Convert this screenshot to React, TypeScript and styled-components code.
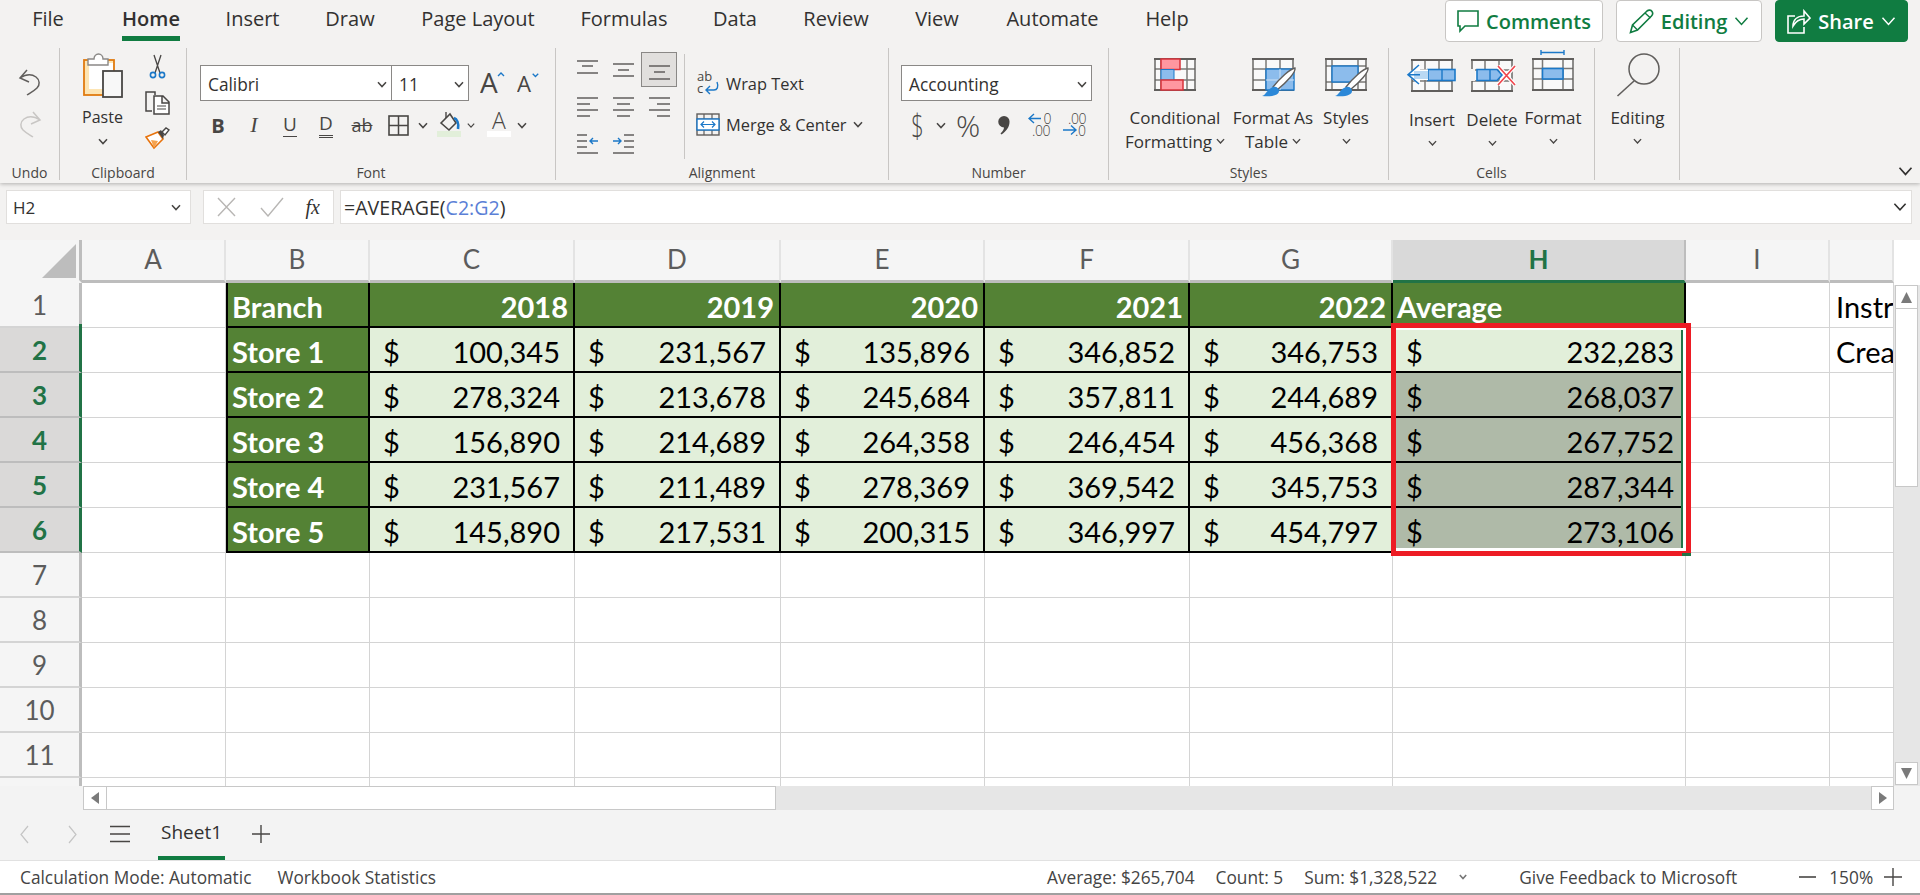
import { Fragment } from 'react'
import styled, { createGlobalStyle } from 'styled-components'

const GlobalStyle = createGlobalStyle`
  html, body {
    margin: 0;
    height: 100%;
    overflow: hidden;
    background: #fff;
  }
  * {
    box-sizing: border-box;
  }
`

const UI_FONT = `'Open Sans', 'Noto Sans', sans-serif`
const CELL_FONT = `Lato, 'Liberation Sans', sans-serif`
const GREEN = '#107c41'
const GRAY = '#605e5c'
const DARK = '#484644'
const BLUE = '#1b78c8'
const LIGHT_BLUE = '#8cbcec'

const Page = styled.div`
  width: 1920px;
  height: 895px;
  overflow: hidden;
  display: flex;
  flex-direction: column;
  font-family: ${UI_FONT};
  color: #323130;
  background: #f3f3f3;
`

/* ---------- tabs ---------- */

const TabBar = styled.div`
  height: 48px;
  display: flex;
  align-items: flex-start;
`

const Tab = styled.div<{ $gap: number; $w: number; $active?: boolean }>`
  margin-left: ${(p) => p.$gap}px;
  width: ${(p) => p.$w}px;
  height: 41px;
  padding-top: 1px;
  display: flex;
  align-items: center;
  justify-content: center;
  white-space: nowrap;
  font-size: 20px;
  font-weight: ${(p) => (p.$active ? 600 : 400)};
  color: #323130;
  border-bottom: 5px solid ${(p) => (p.$active ? GREEN : 'transparent')};
`

const Actions = styled.div`
  margin-left: auto;
  margin-right: 12px;
  display: flex;
  gap: 13px;
`

const ActionButton = styled.div<{ $w: number; $primary?: boolean }>`
  width: ${(p) => p.$w}px;
  height: 42px;
  display: flex;
  align-items: center;
  justify-content: center;
  gap: 7px;
  border-radius: 4px;
  font-size: 20px;
  font-weight: 600;
  background: ${(p) => (p.$primary ? GREEN : '#fff')};
  color: ${(p) => (p.$primary ? '#fff' : GREEN)};
  border: 1px solid ${(p) => (p.$primary ? GREEN : '#c8c6c4')};
`

/* ---------- ribbon ---------- */

const Ribbon = styled.div`
  height: 183px;
  background: #f3f2f1;
  box-shadow: 0 1px 4px rgba(0, 0, 0, 0.28);
  position: relative;
  z-index: 3;
`

const Groups = styled.div`
  display: flex;
  height: 132px;
`

const Group = styled.div<{ $w: number }>`
  width: ${(p) => p.$w}px;
  height: 132px;
  flex: none;
  display: flex;
  flex-direction: column;
  border-right: 1px solid #c8c6c4;
`

const GroupBody = styled.div<{ $pad?: number }>`
  height: 113px;
  flex: none;
  display: flex;
  padding-left: ${(p) => p.$pad ?? 0}px;
`

const GroupLabel = styled.div`
  height: 19px;
  flex: none;
  margin-top: 2px;
  line-height: 19px;
  text-align: center;
  font-size: 14px;
  color: ${DARK};
`

const Collapse = styled.div`
  margin-left: auto;
  margin-right: 7px;
  align-self: flex-end;
  height: 14px;
  display: flex;
`

const Stack = styled.div<{ $gap?: number; $top?: number; $w?: number }>`
  display: flex;
  flex-direction: column;
  align-items: center;
  gap: ${(p) => p.$gap ?? 0}px;
  padding-top: ${(p) => p.$top ?? 0}px;
  ${(p) => (p.$w ? `width: ${p.$w}px;` : '')}
`

const Column = styled.div<{ $top: number }>`
  padding-top: ${(p) => p.$top}px;
`

const Row = styled.div<{ $h?: number; $mt?: number }>`
  display: flex;
  align-items: center;
  height: ${(p) => p.$h ?? 36}px;
  margin-top: ${(p) => p.$mt ?? 0}px;
`

const Combo = styled.div<{ $w: number; $split?: boolean }>`
  width: ${(p) => p.$w}px;
  height: 36px;
  padding: 2px 4px 0 7px;
  display: flex;
  align-items: center;
  justify-content: space-between;
  background: #fff;
  border: 1px solid #8a8886;
  border-right-width: ${(p) => (p.$split ? 0 : 1)}px;
  font-size: 17.3px;
  color: #323130;
`

const Slot = styled.div<{ $w: number }>`
  width: ${(p) => p.$w}px;
  height: 100%;
  flex: none;
  display: flex;
  align-items: center;
  justify-content: center;
  font-size: 19px;
  color: ${DARK};
`

const Bold = styled.span`
  font-weight: 700;
  font-size: 20px;
`

const Italic = styled.span`
  font-family: 'Liberation Serif', serif;
  font-style: italic;
  font-size: 22px;
`

const Under = styled.span<{ $double?: boolean; $strike?: boolean }>`
  font-size: ${(p) => (p.$strike ? 18 : 19)}px;
  line-height: 23px;
  ${(p) => (p.$strike ? 'text-decoration: line-through; text-decoration-thickness: 1px;' : `
    border-bottom: ${p.$double ? '3px double' : '1px solid'} ${DARK};`)}
`

const AlignGrid = styled.div`
  display: grid;
  grid-template-columns: repeat(3, 36px);
  grid-auto-rows: 35px;
  row-gap: 2px;
  padding-top: 4px;
`

const AlignButton = styled.div<{ $active?: boolean }>`
  display: flex;
  align-items: center;
  justify-content: center;
  ${(p) => (p.$active ? 'background: #e1dfdd; border: 1px solid #8a8886;' : '')}
`

const VRule = styled.div`
  width: 1px;
  height: 105px;
  margin: 6px 11px 0 7px;
  background: #c8c6c4;
`

const TextAction = styled.div<{ $mt?: number }>`
  height: 36px;
  margin-top: ${(p) => p.$mt ?? 0}px;
  display: flex;
  align-items: center;
  gap: 6px;
  font-size: 16.4px;
  color: #323130;
  white-space: nowrap;
`

const BigButton = styled.div<{ $w: number }>`
  width: ${(p) => p.$w}px;
  flex: none;
  padding-top: 4px;
  display: flex;
  flex-direction: column;
  align-items: center;
  font-size: 17px;
  color: #323130;
`

const BigIcon = styled.div<{ $h?: number }>`
  height: ${(p) => p.$h ?? 53}px;
  display: flex;
  align-items: center;
  padding-bottom: 8px;
`

const LabelLine = styled.div`
  height: 24px;
  display: flex;
  align-items: center;
  justify-content: center;
  gap: 4px;
  white-space: nowrap;
`

const PasteLabel = styled(LabelLine)`
  margin-top: 6px;
  font-size: 16px;
`

const Glyph = styled.span<{ $narrow?: boolean }>`
  font-size: ${(p) => (p.$narrow ? 33 : 30)}px;
  font-weight: 300;
  ${(p) => (p.$narrow ? 'transform: scaleX(0.66);' : '')}
`

/* ---------- formula bar ---------- */

const FormulaBar = styled.div`
  height: 57px;
  padding: 7px 8px 16px 6px;
  display: flex;
  background: #f3f2f1;
`

const BarBox = styled.div<{ $w?: number; $ml: number }>`
  ${(p) => (p.$w ? `width: ${p.$w}px; flex: none;` : 'flex: 1;')}
  margin-left: ${(p) => p.$ml}px;
  display: flex;
  align-items: center;
  background: #fff;
  border: 1px solid #e1dfdd;
  font-size: 17px;
  color: #323130;
`

const NameBox = styled(BarBox)`
  justify-content: space-between;
  padding: 0 9px 0 6px;
`

const FxBox = styled(BarBox)`
  justify-content: space-between;
  padding: 0 13px 0 11px;
`

const FormulaText = styled(BarBox)`
  justify-content: space-between;
  padding: 0 4px 0 3px;
  font-size: 19.6px;
`

const Reference = styled.span`
  color: #5b7fd6;
`

const FxLabel = styled.span`
  font-family: 'Liberation Serif', serif;
  font-style: italic;
  font-size: 20px;
  color: #323130;
`

/* ---------- sheet ---------- */

const SheetArea = styled.div`
  height: 546px;
  display: flex;
  background: #fff;
`

const Grid = styled.div`
  width: 1894px;
  height: 546px;
  overflow: hidden;
  display: grid;
  grid-template-columns: 82px 144px 144px 205px 206px 204px 205px 203px 293px 144px 64px;
  grid-template-rows: 43px;
  grid-auto-rows: 45px;
  font-family: ${CELL_FONT};
  font-size: 29px;
  color: #000;
`

const Corner = styled.div`
  background: #f5f5f5;
  border-right: 3px solid #bdbdbd;
  border-bottom: 3px solid #f5f5f5;
  display: flex;
  justify-content: flex-end;
  padding: 4px 3px 0 0;
`

const ColHead = styled.div<{ $active?: boolean }>`
  display: flex;
  align-items: center;
  justify-content: center;
  padding-bottom: 3px;
  font-size: 26px;
  font-weight: ${(p) => (p.$active ? 700 : 400)};
  color: ${(p) => (p.$active ? '#217346' : '#5c5c5c')};
  background: ${(p) => (p.$active ? '#d9d9d9' : '#f5f5f5')};
  border-right: 2px solid ${(p) => (p.$active ? '#bdbdbd' : '#e3e3e3')};
  border-bottom: 3px solid ${(p) => (p.$active ? '#217346' : '#bdbdbd')};
`

const RowHead = styled.div<{ $active?: boolean; $first?: boolean }>`
  position: relative;
  display: flex;
  align-items: center;
  justify-content: center;
  font-size: 26px;
  font-weight: ${(p) => (p.$active ? 700 : 400)};
  color: ${(p) => (p.$active ? '#217346' : '#5c5c5c')};
  background: ${(p) => (p.$active ? '#dad9d8' : '#f5f5f5')};
  border-right: 3px solid ${(p) => (p.$active ? '#217346' : '#bdbdbd')};
  border-bottom: 2px solid ${(p) => (p.$active ? '#bdbdbd' : '#d4d4d4')};
  ${(p) =>
    p.$first
      ? `&::before {
          content: '';
          position: absolute;
          right: -3px;
          top: -4px;
          width: 3px;
          height: 4px;
          background: #217346;
        }`
      : ''}
`

const Cell = styled.div`
  overflow: hidden;
  white-space: nowrap;
  display: flex;
  align-items: center;
  padding: 3px 0 0 6px;
  border-right: 1px solid #d4d4d4;
  border-bottom: 1px solid #d4d4d4;
`

const TableCell = styled.div<{ $first?: boolean }>`
  display: flex;
  align-items: center;
  white-space: nowrap;
  padding-top: 3px;
  border-right: 2px solid #000;
  border-bottom: 2px solid #000;
  ${(p) => (p.$first ? 'border-left: 2px solid #000;' : '')}
`

const HeadCell = styled(TableCell)<{ $right?: boolean }>`
  justify-content: ${(p) => (p.$right ? 'flex-end' : 'flex-start')};
  padding-left: 4px;
  padding-right: 5px;
  background: #548235;
  color: #fff;
  font-weight: 700;
`

const NumCell = styled(TableCell)<{ $selected?: boolean; $tight?: boolean }>`
  position: relative;
  justify-content: space-between;
  padding-left: 13px;
  padding-right: ${(p) => (p.$tight ? 10 : 13)}px;
  background: ${(p) => (p.$selected ? '#afbaa8' : '#e2efda')};
`

// Range highlight, hangs over H2:H6 from the active cell
const SelectionBox = styled.div`
  position: absolute;
  left: -2px;
  top: -5px;
  width: 300px;
  height: 233px;
  border: 5px solid #ed1c24;
  box-shadow: inset 0 2px #fff, inset 0 -3px #fff, inset -3px 0 #fff, inset -5px 0 #217346;
  z-index: 2;
  pointer-events: none;

  &::after {
    content: '';
    position: absolute;
    right: -5px;
    bottom: -5px;
    width: 9px;
    height: 3px;
    background: #217346;
  }
`

const VScroll = styled.div`
  width: 26px;
  padding: 0 2px 1px 1px;
  display: flex;
  flex-direction: column;
  background: #e6e6e6;
`

const VTop = styled.div`
  height: 45px;
  margin: 0 -2px 0 -1px;
  background: #fff;
  flex: none;
`

const ScrollButton = styled.div<{ $w?: number; $h?: number }>`
  ${(p) => (p.$w ? `width: ${p.$w}px;` : '')}
  ${(p) => (p.$h ? `height: ${p.$h}px;` : '')}
  flex: none;
  display: flex;
  align-items: center;
  justify-content: center;
  background: #fff;
  border: 1px solid #c8c8c8;
`

const VThumb = styled.div`
  height: 178px;
  flex: none;
  background: #fff;
  border: 1px solid #c8c8c8;
  border-top: 0;
`

const HScroll = styled.div`
  height: 24px;
  padding-left: 83px;
  padding-right: 26px;
  display: flex;
  background: #f3f3f3;
`

const HTrack = styled.div`
  flex: 1;
  display: flex;
  background: #e6e6e6;
`

const HThumb = styled.div`
  width: 669px;
  background: #fff;
  border: 1px solid #c8c8c8;
  border-left: 0;
`

const HSpacer = styled.div`
  flex: 1;
`

/* ---------- sheet tabs + status ---------- */

const SheetTabs = styled.div`
  height: 51px;
  display: flex;
  align-items: stretch;
  background: #f3f3f3;
  border-bottom: 1px solid #e1e1e1;
`

const NavSlot = styled.div<{ $w: number }>`
  width: ${(p) => p.$w}px;
  flex: none;
  display: flex;
  align-items: center;
  justify-content: center;
  padding-bottom: 2px;
`

const SheetTab = styled.div`
  width: 67px;
  display: flex;
  align-items: center;
  justify-content: center;
  padding-bottom: 2px;
  font-size: 19px;
  font-weight: 500;
  color: #323130;
  border-bottom: 4px solid ${GREEN};
`

const StatusBar = styled.div`
  height: 34px;
  padding: 0 22px 0 20px;
  display: flex;
  align-items: center;
  background: #fff;
  border-bottom: 2px solid #a0a0a0;
  font-size: 17.3px;
  color: #444;
  white-space: nowrap;
`

const StatusItem = styled.span<{ $ml?: number }>`
  margin-left: ${(p) => p.$ml ?? 0}px;
  display: flex;
  align-items: center;
`

/* ---------- icons ---------- */

function Chev({ size = 10, color = DARK, sw = 1.5 }: { size?: number; color?: string; sw?: number }) {
  return (
    <svg width={size} height={size * 0.7} viewBox="0 0 10 7" fill="none">
      <path d="M1 1.2 5 5.6 9 1.2" stroke={color} strokeWidth={sw} />
    </svg>
  )
}

function Tri({ dir }: { dir: 'up' | 'down' | 'left' | 'right' }) {
  const pts = { up: '0,10 5,0 10,10', down: '0,0 5,10 10,0', left: '8,0 0,6 8,12', right: '0,0 8,6 0,12' }[dir]
  const vert = dir === 'up' || dir === 'down'
  return (
    <svg width={vert ? 11 : 8} height={vert ? 11 : 12} viewBox={vert ? '0 0 10 10' : '0 0 8 12'}>
      <polygon points={pts} fill="#7a7a7a" />
    </svg>
  )
}

function UndoIcon({ color, flip }: { color: string; flip?: boolean }) {
  return (
    <svg width="24" height="27" viewBox="0 0 24 27" fill="none" style={flip ? { transform: 'scaleX(-1)' } : undefined}>
      <path d="M9 1 2 9l9 4M2 9c6-4 12-4 16-1 4 3 4 8 1 11-3 3-7 5-10 7" stroke={color} strokeWidth="1.5" />
    </svg>
  )
}

function PasteIcon() {
  return (
    <svg width="40" height="46" viewBox="0 0 40 46">
      <rect x="1" y="7" width="30" height="35" fill="#fde5b4" stroke="#e07b10" strokeWidth="1.8" />
      <rect x="6" y="10" width="24" height="26" fill="#fff" />
      <path d="M5 12V6h6c0-3 2-5 4.5-5S20 3 20 6h5v6z" fill="#fff" stroke="#8a8886" strokeWidth="1.4" />
      <rect x="20" y="18" width="19" height="26" fill="#f8f8f8" stroke={DARK} strokeWidth="1.8" />
    </svg>
  )
}

function ScissorsIcon() {
  return (
    <svg width="17" height="25" viewBox="0 0 17 25" fill="none">
      <path d="M5 1l6 18M12 1 6 19" stroke={DARK} strokeWidth="1.3" />
      <circle cx="4" cy="21" r="2.6" stroke={BLUE} strokeWidth="1.6" />
      <circle cx="13" cy="21" r="2.6" stroke={BLUE} strokeWidth="1.6" />
    </svg>
  )
}

function CopyIcon() {
  return (
    <svg width="25" height="24" viewBox="0 0 25 24" fill="none" stroke={DARK} strokeWidth="1.5">
      <path d="M7 20H1V1h9v3" />
      <path d="M9 5h9l6 6v12H9zM17 5v7h7" fill="#fff" />
      <path d="M12 15h9M12 18h9" strokeWidth="1.2" />
    </svg>
  )
}

function PainterIcon() {
  return (
    <svg width="25" height="23" viewBox="0 0 25 23" fill="none">
      <path d="M1 10 13 5l5 7-9 9z" fill="#fff" stroke="#e8730c" strokeWidth="1.6" />
      <path d="M6 13l7 1-4 7z" fill="#f5a24d" />
      <path d="M13 5l3-2 3 5-1 4z" fill={DARK} />
      <path d="M17 5l4-4 3 2-4 5z" fill="#fff" stroke={DARK} strokeWidth="1.4" />
    </svg>
  )
}

function GrowIcon({ down }: { down?: boolean }) {
  const big = down ? 24 : 28
  return (
    <svg width={down ? 24 : 26} height="26" viewBox="0 0 26 26" fill="none">
      <text x="0" y="23" fontFamily="'Open Sans', sans-serif" fontSize={big} fill={DARK}>
        A
      </text>
      <path d={down ? 'M17 3l3 3 3-3' : 'M18 6l3-3 3 3'} stroke={BLUE} strokeWidth="1.4" />
    </svg>
  )
}

function BordersIcon() {
  return (
    <svg width="21" height="21" viewBox="0 0 21 21" fill="none" stroke={DARK}>
      <rect x="1" y="1" width="19" height="19" strokeWidth="1.6" />
      <path d="M10.5 1v19M1 10.5h19" strokeWidth="1.5" />
    </svg>
  )
}

function FillIcon() {
  return (
    <svg width="24" height="30" viewBox="0 0 24 30" fill="none">
      <path d="M4 13 13 4l6 9-7 7z" stroke={DARK} strokeWidth="1.6" />
      <path d="M9 2v6" stroke={DARK} strokeWidth="1.4" />
      <path d="M17 8c3 1 5 5 4 11" stroke={BLUE} strokeWidth="2.6" />
      <rect x="0" y="21" width="24" height="6" fill="#e2efda" />
    </svg>
  )
}

function FontColorIcon() {
  return (
    <svg width="24" height="30" viewBox="0 0 24 30" fill="none">
      <text x="12" y="19" textAnchor="middle" fontFamily="'Open Sans', sans-serif" fontSize="23" fontWeight="300" fill={DARK}>
        A
      </text>
      <rect x="0" y="21" width="24" height="6" fill="#fff" />
    </svg>
  )
}

function CommaIcon() {
  return (
    <svg width="12" height="19" viewBox="0 0 12 19">
      <path d="M6 0a5.5 5.5 0 0 1 5.5 6c0 5-3 9-8 12.500l-1-1c2-2 3.500-4 3.500-6A5.500 5.500 0 1 1 6 0z" fill={DARK} />
    </svg>
  )
}

type Line = [number, number, number]

function LinesIcon({ lines, children }: { lines: Line[]; children?: React.ReactNode }) {
  return (
    <svg width="23" height="22" viewBox="0 0 23 22" fill="none">
      {lines.map(([a, b, y]) => (
        <path key={`${a}-${y}`} d={`M${a} ${y}H${b}`} stroke={GRAY} strokeWidth="1.5" />
      ))}
      {children}
    </svg>
  )
}

const Arrow = ({ d }: { d: string }) => <path d={d} stroke={BLUE} strokeWidth="1.4" />

function WrapIcon() {
  return (
    <svg width="24" height="24" viewBox="0 0 24 24" fill="none">
      <text x="1" y="10" fontFamily="'Open Sans', sans-serif" fontSize="13" fill={DARK}>
        ab
      </text>
      <text x="1" y="22" fontFamily="'Open Sans', sans-serif" fontSize="13" fill={DARK}>
        c
      </text>
      <path d="M21 11c2 5 0 8-3 8H11M14 15l-4 4 4 4" stroke={BLUE} strokeWidth="1.4" />
    </svg>
  )
}

function MergeIcon() {
  return (
    <svg width="24" height="23" viewBox="0 0 24 23" fill="none">
      <rect x="1" y="1" width="22" height="21" stroke={GRAY} strokeWidth="1.4" />
      <path d="M1 6h22M1 17h22M8 1v5M16 1v5M8 17v5M16 17v5" stroke={GRAY} strokeWidth="1.2" />
      <rect x="1" y="6" width="22" height="11" fill="#fff" stroke={BLUE} strokeWidth="1.4" />
      <path d="M5 11.5h14M8 8.5l-3 3 3 3M16 8.5l3 3-3 3" stroke={BLUE} strokeWidth="1.2" />
    </svg>
  )
}

function DecimalIcon({ more }: { more?: boolean }) {
  const digits = { fontFamily: UI_FONT, fontSize: 14, fontWeight: 300, letterSpacing: -0.4, fill: DARK }
  return (
    <svg width="24" height="24" viewBox="0 0 24 24" fill="none">
      {more ? (
        <>
          <text x="15.500" y="10.500" {...digits}>
            0
          </text>
          <text x="4" y="23" {...digits}>
            .00
          </text>
          <path d="M13 5.500H1M6 1 1 5.500 6 10" stroke={BLUE} strokeWidth="1.4" />
        </>
      ) : (
        <>
          <text x="5" y="10.500" {...digits}>
            .00
          </text>
          <text x="12" y="23" {...digits}>
            .0
          </text>
          <path d="M0 17h13M8 12.500l5 4.500-5 4.500" stroke={BLUE} strokeWidth="1.4" />
        </>
      )}
    </svg>
  )
}

// Empty spreadsheet the big ribbon icons are drawn on, vertical rule positions vary
function SheetGlyph({ cols, rows = [11, 22], children }: { cols: number[]; rows?: number[]; children?: React.ReactNode }) {
  return (
    <svg width="42" height="33" viewBox="0 0 42 33" fill="none" style={{ overflow: 'visible' }}>
      <rect x="0.5" y="0.5" width="41" height="32" fill="#f9f9f9" />
      {cols.map((x) => (
        <path key={x} d={`M${x} 1v31`} stroke="#7a7876" strokeWidth="1.5" />
      ))}
      {rows.map((y) => (
        <path key={y} d={`M1 ${y}h40`} stroke="#7a7876" strokeWidth="1.5" />
      ))}
      <path d="M1 1h40v31H1z" stroke={GRAY} strokeWidth="1.4" />
      <path d="M0 1h42M0 32h42" stroke={GRAY} strokeWidth="2" />
      {children}
    </svg>
  )
}

function ConditionalIcon() {
  return (
    <SheetGlyph cols={[7, 33]}>
      <rect x="7" y="1" width="19" height="10.500" fill="#ff97a0" stroke="#d8333b" strokeWidth="1.5" />
      <rect x="7" y="11.500" width="13" height="10.500" fill={LIGHT_BLUE} stroke={BLUE} strokeWidth="1" />
      <rect x="7" y="22" width="22" height="10" fill="#ff97a0" stroke="#d8333b" strokeWidth="1.5" />
    </SheetGlyph>
  )
}

const Brush = () => (
  <>
    <path d="M43 10c1 4-8 14-18 22l-4-3C28 20 38 11 43 10z" fill="#fff" stroke={GRAY} strokeWidth="1.4" />
    <path d="M21 29c3-1 6 1 6 4 0 4-6 6-17 5 4-1 5-7 11-9z" fill="#2b88d8" />
  </>
)

function TableStyleIcon() {
  return (
    <SheetGlyph cols={[14, 28]}>
      <rect x="14" y="11" width="28" height="21" fill={LIGHT_BLUE} stroke={BLUE} strokeWidth="1.4" />
      <path d="M28 11v21M14 22h28" stroke="#cfe3f7" strokeWidth="1" />
      <Brush />
    </SheetGlyph>
  )
}

function CellStylesIcon() {
  return (
    <SheetGlyph cols={[7, 33]} rows={[8, 24]}>
      <rect x="7" y="8" width="26" height="16" fill={LIGHT_BLUE} stroke={BLUE} strokeWidth="1.4" />
      <Brush />
    </SheetGlyph>
  )
}

function InsertIcon() {
  return (
    <SheetGlyph cols={[14, 28]}>
      <rect x="17" y="10.500" width="27" height="11" fill={LIGHT_BLUE} stroke={BLUE} strokeWidth="1.6" />
      <path d="M31 10.500v11" stroke={BLUE} strokeWidth="1.4" />
      <path d="M9 4-4 15.700 9 27v-6h8V10.500H9z" fill="#fff" />
      <rect x="3" y="12" width="14" height="8" fill="#b9d8f3" />
      <path d="M8 6-3 15.700 8 25M-3 15.700h12" stroke={BLUE} strokeWidth="1.6" />
    </SheetGlyph>
  )
}

function DeleteIcon() {
  return (
    <SheetGlyph cols={[14, 28]}>
      <rect x="-1" y="10" width="5" height="12" fill="#f3f2f1" />
      <path d="M6 10.500h20l5 5.500-5 5.500H6z" fill={LIGHT_BLUE} stroke={BLUE} strokeWidth="1.6" />
      <path d="M19 10.500v11" stroke={BLUE} strokeWidth="1.4" />
      <path d="M27 7l17 19M44 7 27 26" stroke="#fff" strokeWidth="4" />
      <path d="M27 7l17 19M44 7 27 26" stroke="#f0484f" strokeWidth="1.7" />
    </SheetGlyph>
  )
}

function FormatCellsIcon() {
  return (
    <svg width="42" height="42" viewBox="0 -9 42 42" fill="none" style={{ marginTop: '-9px', overflow: 'visible' }}>
      <path d="M9 -8v5M32 -8v5M9 -5.500h23" stroke={BLUE} strokeWidth="1.4" />
      <rect x="0.5" y="0.5" width="41" height="32" fill="#f9f9f9" />
      <path d="M10.500 1v31M31 1v31M1 10.500h40M1 21h40" stroke="#7a7876" strokeWidth="1.5" />
      <path d="M1 1h40v31H1z" stroke={GRAY} strokeWidth="1.4" />
      <path d="M0 1h42M0 32h42" stroke={GRAY} strokeWidth="2" />
      <rect x="10.500" y="10.500" width="20.500" height="10.500" fill={LIGHT_BLUE} stroke={BLUE} strokeWidth="1.6" />
    </svg>
  )
}

function SearchIcon() {
  return (
    <svg width="44" height="44" viewBox="0 0 44 44" fill="none" stroke={GRAY}>
      <circle cx="28" cy="16" r="15" strokeWidth="1.5" />
      <path d="M18 28 1.5 43" strokeWidth="1.6" />
    </svg>
  )
}

function CommentIcon() {
  return (
    <svg width="22" height="23" viewBox="0 0 22 23" fill="none">
      <path d="M1 1h20v15H8l-5 5v-5H1z" stroke={GREEN} strokeWidth="1.6" />
    </svg>
  )
}

function PencilIcon() {
  return (
    <svg width="25" height="25" viewBox="0 0 25 25" fill="none">
      <path d="M1.500 23.500 3.500 16 18 2c2-1.500 4-1 5 .5s1 3-.5 4.500L8.500 21z" stroke={GREEN} strokeWidth="1.6" />
      <path d="M3.500 16l5 5M16 4l5.500 5" stroke={GREEN} strokeWidth="1.4" />
    </svg>
  )
}

function ShareIcon() {
  return (
    <svg width="24" height="25" viewBox="0 0 24 25" fill="none" stroke="#fff" strokeWidth="1.6">
      <path d="M8 7H1v17h16v-6" />
      <path d="M6 17c0-6 4-10 11-10V2l6 7-6 6v-5c-4 0-8 2-11 7z" />
    </svg>
  )
}

function GhostMark({ check }: { check?: boolean }) {
  return (
    <svg width="24" height="20" viewBox="0 0 24 20" fill="none">
      <path d={check ? 'M1 11l7 8L23 1' : 'M3 1l17 18M20 1 3 19'} stroke="#b8b6b4" strokeWidth="1.4" />
    </svg>
  )
}

function NavArrow({ right }: { right?: boolean }) {
  return (
    <svg width="9" height="19" viewBox="0 0 9 19" fill="none">
      <path d={right ? 'M1 1l7 8.500L1 18' : 'M8 1 1 9.500 8 18'} stroke="#c4c4c4" strokeWidth="1.2" />
    </svg>
  )
}

function MenuLines() {
  return (
    <svg width="20" height="18" viewBox="0 0 20 18" fill="none">
      <path d="M0 1.500h20M0 9h20M0 16.500h20" stroke={DARK} strokeWidth="1.4" />
    </svg>
  )
}

function PlusIcon({ size = 18 }: { size?: number }) {
  return (
    <svg width={size} height={size} viewBox="0 0 18 18" fill="none">
      <path d="M9 0v18M0 9h18" stroke={DARK} strokeWidth="1.4" />
    </svg>
  )
}

/* ---------- data ---------- */

const tabs = [
  { label: 'File', gap: 33, w: 30 },
  { label: 'Home', gap: 59, w: 58 },
  { label: 'Insert', gap: 47, w: 51 },
  { label: 'Draw', gap: 49, w: 46 },
  { label: 'Page Layout', gap: 49, w: 112 },
  { label: 'Formulas', gap: 49, w: 82 },
  { label: 'Data', gap: 49, w: 42 },
  { label: 'Review', gap: 48, w: 64 },
  { label: 'View', gap: 47, w: 44 },
  { label: 'Automate', gap: 48, w: 91 },
  { label: 'Help', gap: 48, w: 42 },
]

const alignLines: Line[][] = [
  [[1, 22, 2], [6, 17, 7], [1, 22, 14]],
  [[1, 22, 5], [6, 17, 11], [1, 22, 17]],
  [[1, 22, 7], [6, 17, 13], [1, 22, 20]],
  [[1, 22, 2], [1, 14, 8], [1, 22, 14], [1, 14, 20]],
  [[1, 22, 2], [5, 18, 8], [1, 22, 14], [5, 18, 20]],
  [[1, 22, 2], [9, 22, 8], [1, 22, 14], [9, 22, 20]],
]

const columns = ['A', 'B', 'C', 'D', 'E', 'F', 'G', 'H', 'I', '']
const years = ['2018', '2019', '2020', '2021', '2022']

const stores = [
  { name: 'Store 1', values: ['100,345', '231,567', '135,896', '346,852', '346,753'], average: '232,283' },
  { name: 'Store 2', values: ['278,324', '213,678', '245,684', '357,811', '244,689'], average: '268,037' },
  { name: 'Store 3', values: ['156,890', '214,689', '264,358', '246,454', '456,368'], average: '267,752' },
  { name: 'Store 4', values: ['231,567', '211,489', '278,369', '369,542', '345,753'], average: '287,344' },
  { name: 'Store 5', values: ['145,890', '217,531', '200,315', '346,997', '454,797'], average: '273,106' },
]

const sideNotes: Record<number, string> = { 0: 'Instructions', 1: 'Create' }

function SheetRows() {
  const blankRows = [7, 8, 9, 10, 11, 12]
  return (
    <>
      <Corner>
        <svg width="34" height="34" viewBox="0 0 34 34">
          <polygon points="34,0 34,34 0,34" fill="#bdbdbd" />
        </svg>
      </Corner>
      {columns.map((c) => (
        <ColHead key={c} $active={c === 'H'}>
          {c}
        </ColHead>
      ))}

      <RowHead>1</RowHead>
      <Cell />
      <HeadCell $first>Branch</HeadCell>
      {years.map((y) => (
        <HeadCell key={y} $right>
          {y}
        </HeadCell>
      ))}
      <HeadCell>Average</HeadCell>
      <Cell />
      <Cell>{sideNotes[0]}</Cell>

      {stores.map((store, i) => (
        <Fragment key={store.name}>
          <RowHead $active $first={i === 0}>
            {i + 2}
          </RowHead>
          <Cell />
          <HeadCell $first>{store.name}</HeadCell>
          {store.values.map((v, j) => (
            <NumCell key={j}>
              <span>$</span>
              <span>{v}</span>
            </NumCell>
          ))}
          <NumCell $selected={i > 0} $tight>
            <span>$</span>
            <span>{store.average}</span>
            {i === 0 && <SelectionBox />}
          </NumCell>
          <Cell />
          <Cell>{sideNotes[i + 1]}</Cell>
        </Fragment>
      ))}

      {blankRows.map((r) => (
        <Fragment key={r}>
          <RowHead>{r}</RowHead>
          {columns.map((c) => (
            <Cell key={c} />
          ))}
        </Fragment>
      ))}
    </>
  )
}

export default function App() {
  return (
    <Page>
      <GlobalStyle />
      <Ribbon>
        <TabBar>
          {tabs.map((t) => (
            <Tab key={t.label} $gap={t.gap} $w={t.w} $active={t.label === 'Home'}>
              {t.label}
            </Tab>
          ))}
          <Actions>
            <ActionButton $w={158}>
              <CommentIcon />
              Comments
            </ActionButton>
            <ActionButton $w={146}>
              <PencilIcon />
              Editing
              <Chev size={15} color={GREEN} sw={1} />
            </ActionButton>
            <ActionButton $w={133} $primary>
              <ShareIcon />
              Share
              <Chev size={15} color="#fff" sw={1} />
            </ActionButton>
          </Actions>
        </TabBar>

        <Groups>
          <Group $w={60}>
            <GroupBody>
              <Stack $w={60} $top={21} $gap={15}>
                <UndoIcon color={GRAY} />
                <UndoIcon color="#c8c6c4" flip />
              </Stack>
            </GroupBody>
            <GroupLabel>Undo</GroupLabel>
          </Group>

          <Group $w={127}>
            <GroupBody>
              <Stack $w={85} $top={5}>
                <PasteIcon />
                <PasteLabel>Paste</PasteLabel>
                <LabelLine>
                  <Chev />
                </LabelLine>
              </Stack>
              <Stack $top={6} $gap={12}>
                <ScissorsIcon />
                <CopyIcon />
                <PainterIcon />
              </Stack>
            </GroupBody>
            <GroupLabel>Clipboard</GroupLabel>
          </Group>

          <Group $w={369}>
            <GroupBody $pad={13}>
              <Column $top={17}>
                <Row>
                  <Combo $w={191} $split>
                    Calibri
                    <Chev />
                  </Combo>
                  <Combo $w={78}>
                    11
                    <Chev />
                  </Combo>
                  <Slot $w={47}>
                    <GrowIcon />
                  </Slot>
                  <Slot $w={25}>
                    <GrowIcon down />
                  </Slot>
                </Row>
                <Row $mt={6}>
                  <Slot $w={36}>
                    <Bold>B</Bold>
                  </Slot>
                  <Slot $w={36}>
                    <Italic>I</Italic>
                  </Slot>
                  <Slot $w={36}>
                    <Under>U</Under>
                  </Slot>
                  <Slot $w={36}>
                    <Under $double>D</Under>
                  </Slot>
                  <Slot $w={36}>
                    <Under $strike>ab</Under>
                  </Slot>
                  <Slot $w={36}>
                    <BordersIcon />
                  </Slot>
                  <Slot $w={14}>
                    <Chev />
                  </Slot>
                  <Slot $w={37}>
                    <FillIcon />
                  </Slot>
                  <Slot $w={8}>
                    <Chev />
                  </Slot>
                  <Slot $w={6} />
                  <Slot $w={36}>
                    <FontColorIcon />
                  </Slot>
                  <Slot $w={10}>
                    <Chev />
                  </Slot>
                </Row>
              </Column>
            </GroupBody>
            <GroupLabel>Font</GroupLabel>
          </Group>

          <Group $w={333}>
            <GroupBody $pad={13}>
              <AlignGrid>
                {alignLines.map((lines, i) => (
                  <AlignButton key={i} $active={i === 2}>
                    <LinesIcon lines={lines} />
                  </AlignButton>
                ))}
                <AlignButton>
                  <LinesIcon lines={[[1, 11, 2], [1, 11, 8], [1, 11, 14], [1, 22, 20]]}>
                    <Arrow d="M22 8H14M17 5l-3 3 3 3" />
                  </LinesIcon>
                </AlignButton>
                <AlignButton>
                  <LinesIcon lines={[[12, 22, 2], [12, 22, 8], [12, 22, 14], [1, 22, 20]]}>
                    <Arrow d="M1 8h8M6 5l3 3-3 3" />
                  </LinesIcon>
                </AlignButton>
              </AlignGrid>
              <VRule />
              <Column $top={17}>
                <TextAction>
                  <WrapIcon />
                  Wrap Text
                </TextAction>
                <TextAction $mt={5}>
                  <MergeIcon />
                  Merge &amp; Center
                  <Chev />
                </TextAction>
              </Column>
            </GroupBody>
            <GroupLabel>Alignment</GroupLabel>
          </Group>

          <Group $w={220}>
            <GroupBody $pad={12}>
              <Column $top={17}>
                <Combo $w={191}>
                  Accounting
                  <Chev />
                </Combo>
                <Row $mt={6}>
                  <Slot $w={32}>
                    <Glyph $narrow>$</Glyph>
                  </Slot>
                  <Slot $w={16}>
                    <Chev />
                  </Slot>
                  <Slot $w={38}>
                    <Glyph>%</Glyph>
                  </Slot>
                  <Slot $w={34}>
                    <CommaIcon />
                  </Slot>
                  <Slot $w={38}>
                    <DecimalIcon more />
                  </Slot>
                  <Slot $w={32}>
                    <DecimalIcon />
                  </Slot>
                </Row>
              </Column>
            </GroupBody>
            <GroupLabel>Number</GroupLabel>
          </Group>

          <Group $w={280}>
            <GroupBody $pad={9}>
              <BigButton $w={114}>
                <BigIcon>
                  <ConditionalIcon />
                </BigIcon>
                <LabelLine>Conditional</LabelLine>
                <LabelLine>
                  Formatting
                  <Chev size={9} />
                </LabelLine>
              </BigButton>
              <BigButton $w={82}>
                <BigIcon>
                  <TableStyleIcon />
                </BigIcon>
                <LabelLine>Format As</LabelLine>
                <LabelLine>
                  Table
                  <Chev size={9} />
                </LabelLine>
              </BigButton>
              <BigButton $w={64}>
                <BigIcon>
                  <CellStylesIcon />
                </BigIcon>
                <LabelLine>Styles</LabelLine>
                <LabelLine>
                  <Chev size={9} />
                </LabelLine>
              </BigButton>
            </GroupBody>
            <GroupLabel>Styles</GroupLabel>
          </Group>

          <Group $w={206}>
            <GroupBody $pad={13}>
              <BigButton $w={60}>
                <BigIcon $h={55}>
                  <InsertIcon />
                </BigIcon>
                <LabelLine>Insert</LabelLine>
                <LabelLine>
                  <Chev size={9} />
                </LabelLine>
              </BigButton>
              <BigButton $w={60}>
                <BigIcon $h={55}>
                  <DeleteIcon />
                </BigIcon>
                <LabelLine>Delete</LabelLine>
                <LabelLine>
                  <Chev size={9} />
                </LabelLine>
              </BigButton>
              <BigButton $w={62}>
                <BigIcon>
                  <FormatCellsIcon />
                </BigIcon>
                <LabelLine>Format</LabelLine>
                <LabelLine>
                  <Chev size={9} />
                </LabelLine>
              </BigButton>
            </GroupBody>
            <GroupLabel>Cells</GroupLabel>
          </Group>

          <Group $w={85}>
            <GroupBody>
              <BigButton $w={85}>
                <BigIcon>
                  <SearchIcon />
                </BigIcon>
                <LabelLine>Editing</LabelLine>
                <LabelLine>
                  <Chev size={9} />
                </LabelLine>
              </BigButton>
            </GroupBody>
          </Group>

          <Collapse>
            <Chev size={15} color="#323130" sw={1.1} />
          </Collapse>
        </Groups>
      </Ribbon>

      <FormulaBar>
        <NameBox $w={185} $ml={0}>
          H2
          <Chev />
        </NameBox>
        <FxBox $w={131} $ml={12}>
          <GhostMark />
          <GhostMark check />
          <FxLabel>fx</FxLabel>
        </FxBox>
        <FormulaText $ml={6}>
          <span>
            =AVERAGE(<Reference>C2:G2</Reference>)
          </span>
          <Chev size={14} color="#323130" sw={1.1} />
        </FormulaText>
      </FormulaBar>

      <SheetArea>
        <Grid>
          <SheetRows />
        </Grid>
        <VScroll>
          <VTop />
          <ScrollButton $h={24}>
            <Tri dir="up" />
          </ScrollButton>
          <VThumb />
          <HSpacer />
          <ScrollButton $h={23}>
            <Tri dir="down" />
          </ScrollButton>
        </VScroll>
      </SheetArea>

      <HScroll>
        <ScrollButton $w={24}>
          <Tri dir="left" />
        </ScrollButton>
        <HTrack>
          <HThumb />
          <HSpacer />
          <ScrollButton $w={23}>
            <Tri dir="right" />
          </ScrollButton>
        </HTrack>
      </HScroll>

      <SheetTabs>
        <NavSlot $w={48}>
          <NavArrow />
        </NavSlot>
        <NavSlot $w={48}>
          <NavArrow right />
        </NavSlot>
        <NavSlot $w={48}>
          <MenuLines />
        </NavSlot>
        <NavSlot $w={14} />
        <SheetTab>Sheet1</SheetTab>
        <NavSlot $w={72}>
          <PlusIcon />
        </NavSlot>
      </SheetTabs>

      <StatusBar>
        <StatusItem>Calculation Mode: Automatic</StatusItem>
        <StatusItem $ml={26}>Workbook Statistics</StatusItem>
        <StatusItem $ml={611}>Average: $265,704</StatusItem>
        <StatusItem $ml={21}>Count: 5</StatusItem>
        <StatusItem $ml={21}>Sum: $1,328,522</StatusItem>
        <StatusItem $ml={22}>
          <Chev size={8} color="#777" sw={2} />
        </StatusItem>
        <StatusItem $ml={52}>Give Feedback to Microsoft</StatusItem>
        <StatusItem $ml={62}>
          <svg width="17" height="2" viewBox="0 0 17 2">
            <path d="M0 1h17" stroke={DARK} strokeWidth="1.6" />
          </svg>
        </StatusItem>
        <StatusItem $ml={13}>150%</StatusItem>
        <StatusItem $ml={11}>
          <PlusIcon />
        </StatusItem>
      </StatusBar>
    </Page>
  )
}
